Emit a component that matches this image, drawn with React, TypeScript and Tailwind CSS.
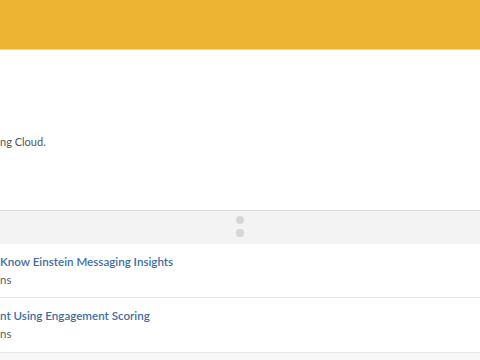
import React from "react";

export default function App() {
  return (
    <div className="w-[480px] h-[360px] overflow-hidden bg-white font-['Lato',sans-serif]">
      <div className="h-[50px] bg-[#edb332] border-b border-[#f6d78c]" />
      <div className="h-[160px] bg-white">
        <p className="pt-[84px] text-[11px] leading-[16px] text-[#555] whitespace-nowrap">ng Cloud.</p>
      </div>
      <div className="h-[34px] bg-[#f3f3f3] border-t border-[#dcdcdc] flex flex-col items-center pt-[5px] gap-[5px]">
        <div className="w-[8px] h-[8px] rounded-full bg-[#d6d6d6]" />
        <div className="w-[8px] h-[8px] rounded-full bg-[#d6d6d6]" />
      </div>
      <div className="h-[54px] border-b border-[#e6e6e6] flex flex-col pt-[10px]">
        <p className="text-[11.6px] leading-[16px] font-semibold text-[#3f6ea3] whitespace-nowrap">Know Einstein Messaging Insights</p>
        <p className="mt-[2px] text-[11.5px] leading-[16px] text-[#5c5c5c] whitespace-nowrap">ns</p>
      </div>
      <div className="h-[55px] border-b border-[#e6e6e6] flex flex-col pt-[10px]">
        <p className="text-[11.6px] leading-[16px] font-semibold text-[#3f6ea3] whitespace-nowrap">nt Using Engagement Scoring</p>
        <p className="mt-[2px] text-[11.5px] leading-[16px] text-[#5c5c5c] whitespace-nowrap">ns</p>
      </div>
      <div className="h-[8px] bg-[#f7f7f7]" />
    </div>
  );
}
